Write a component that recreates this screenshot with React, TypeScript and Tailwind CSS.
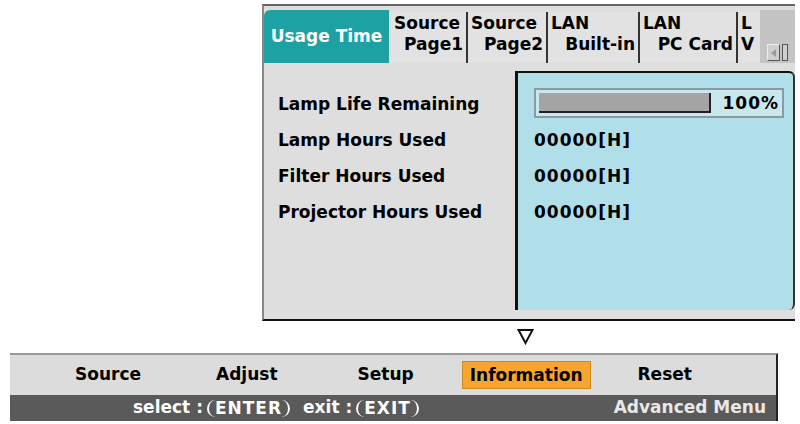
import { ReactNode } from "react";

const FONT = { fontFamily: '"DejaVu Sans", Verdana, sans-serif' };

function Tab({ top, bottom, w }: { top: string; bottom: string; w: string }) {
  return (
    <div className={`${w} mt-[2px] flex flex-col rounded-tl-[5px] border-r-2 border-[#333] bg-[#e2e2e2] px-[3px] pt-[1px] text-[17px] font-bold leading-[21px] text-black`}>
      <span className="text-left">{top}</span>
      <span className="text-right">{bottom}</span>
    </div>
  );
}

function Key({ children }: { children: ReactNode }) {
  return (
    <span className="ml-[4px] rounded-[9px] border-x-2 border-white px-[6px] leading-[17px] tracking-[1px]">{children}</span>
  );
}

const ROWS = ["Lamp Life Remaining", "Lamp Hours Used", "Filter Hours Used", "Projector Hours Used"];

export default function App() {
  return (
    <div className="relative h-[424px] w-[800px] overflow-hidden bg-white" style={FONT}>
      {/* info panel */}
      <div className="ml-[262px] mt-[4px] flex h-[317px] w-[533px] flex-col border-b-2 border-l-2 border-t-2 border-b-[#111] border-l-[#888] border-t-[#666] bg-[#dedede]">
        <div className="flex h-[57px] items-stretch pt-[4px]">
          <div className="flex w-[125px] items-center justify-center rounded-tl-[6px] bg-[#1ea1a3] text-[17px] font-bold text-white">
            Usage Time
          </div>
          <div className="w-[2px]" />
          <Tab top="Source" bottom="Page1" w="w-[77px]" />
          <Tab top="Source" bottom="Page2" w="w-[80px]" />
          <Tab top="LAN" bottom="Built-in" w="w-[92px]" />
          <Tab top="LAN" bottom="PC Card" w="w-[98px]" />
          <div className="mt-[2px] w-[22px] overflow-hidden rounded-tl-[5px] bg-[#e2e2e2] pl-[3px] pt-[1px] text-[17px] font-bold leading-[21px]">
            <div>L</div>
            <div>V</div>
          </div>
          <div className="flex flex-1 items-end gap-[2px] bg-[#c4c4c4] pb-[2px] pl-[7px]">
            <div className="flex h-[17px] w-[13px] items-center justify-center border border-b-[#555] border-l-[#eee] border-r-[#555] border-t-[#eee] bg-[#cfcfcf]">
              <svg width="6" height="8" viewBox="0 0 6 8"><path d="M5 0 L0 4 L5 8 Z" fill="#9a9a9a" /></svg>
            </div>
            <div className="h-[17px] w-[6px] border border-[#555] bg-[#cfcfcf]" />
          </div>
        </div>
        <div className="flex flex-1">
          <div className="flex w-[251px] flex-col gap-[14px] pl-[14px] pt-[30px] text-[17px] font-bold leading-[22px] text-black">
            {ROWS.map((r) => (
              <div key={r}>{r}</div>
            ))}
          </div>
          <div className="mb-[9px] mt-[8px] flex flex-1 flex-col gap-[14px] rounded-r-[6px] border-l-[3px] border-r-2 border-t-2 border-[#111] border-r-[#333] bg-[#b1dfe9] pl-[16px] pr-[9px] pt-[15px] text-[17px] font-bold leading-[22px] tracking-[1px] text-black">
            <div className="-mb-[3px] flex h-[30px] items-center border-2 border-[#8a9aa0] bg-[#c9e8ee] pl-[3px] pr-[3px]">
              <div className="h-[20px] w-[172px] border-b-2 border-r-2 border-b-[#222] border-r-[#222] bg-[#a4a4a4]" />
              <span className="ml-auto">100%</span>
            </div>
            <div>00000[H]</div>
            <div>00000[H]</div>
            <div>00000[H]</div>
          </div>
        </div>
      </div>

      {/* down arrow */}
      <div className="ml-[517px] mt-[7px] h-[17px]">
        <svg width="17" height="17" viewBox="0 0 17 17">
          <path d="M1.5 2 L15.5 2 L8.5 15 Z" fill="none" stroke="#111" strokeWidth="2" />
        </svg>
      </div>

      {/* menu bar */}
      <div className="ml-[10px] mt-[8px] w-[768px] border-r-2 border-t-2 border-r-[#222] border-t-[#999]">
        <div className="flex h-[40px] items-center bg-[#dcdcdc] text-[17px] font-bold text-black">
          <span className="ml-[65px]">Source</span>
          <span className="ml-[75px]">Adjust</span>
          <span className="ml-[80px]">Setup</span>
          <span className="ml-[48px] border border-[#c98a1f] bg-[#f7a52e] px-[7px] leading-[26px]">Information</span>
          <span className="ml-[47px]">Reset</span>
        </div>
        <div className="flex h-[26px] items-center bg-[#5a5a5a] text-[17px] font-bold text-white">
          <span className="ml-[123px]">select :</span>
          <Key>ENTER</Key>
          <span className="ml-[13px]">exit :</span>
          <Key>EXIT</Key>
          <span className="ml-auto mr-[10px] text-[#e8e8e8]">Advanced Menu</span>
        </div>
      </div>
    </div>
  );
}
